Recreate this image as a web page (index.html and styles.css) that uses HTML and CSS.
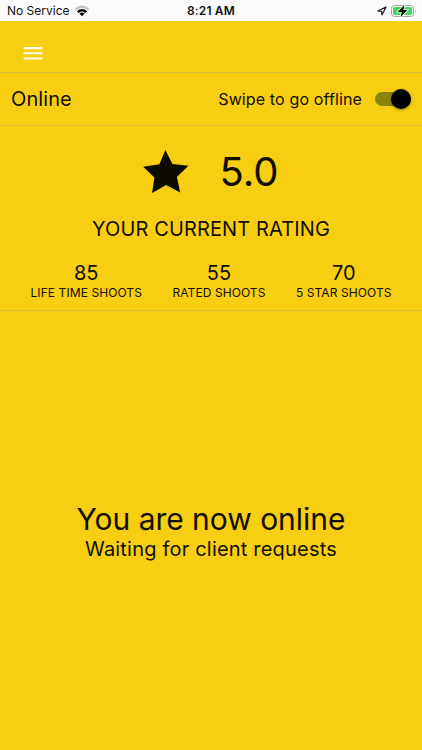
FILE: index.html
```
<!DOCTYPE html>
<html lang="en">
<head>
<meta charset="utf-8">
<title>Online</title>
<link rel="stylesheet" href="styles.css">
</head>
<body>
<div class="status">
  <div class="carrier"><span class="carrier-name">No Service</span>
    <svg width="16" height="12" viewBox="0 0 16 12"><path d="M.6 3.8Q8-2.6 15.4 3.8L13.7 5.5Q8 .7 2.3 5.5Z" fill="#c4c4c4"/><path d="M3 6.2Q8 2 13 6.2L11.3 7.9Q8 5.3 4.7 7.9Z"/><path d="M5.4 8.6Q8 6.6 10.6 8.6L8 11.2Z"/></svg>
  </div>
  <span class="time">8:21 AM</span>
  <div class="power">
    <svg width="10" height="10" viewBox="0 0 10 10"><path d="M.8 5 9 .9 5 9.1 4.7 5.3Z" fill="none" stroke="#111" stroke-width="1.1" stroke-linejoin="round"/></svg>
    <svg width="26" height="14" viewBox="0 0 26 14"><rect x=".5" y="1.5" width="22" height="11" rx="3" fill="#fff" stroke="#a3a3a3"/><rect x="2" y="3" width="19" height="8" rx="1.6" fill="#4bd466"/><path d="M24 5.2q1.6 1.8 0 3.6z" fill="#999"/><path d="M13.5.8 6.8 7.9h4l-1.4 5.3 6.9-7.1h-4z" stroke="#fff" stroke-width="1.4" paint-order="stroke"/></svg>
  </div>
</div>
<header class="toolbar">
  <svg width="20" height="14" viewBox="0 0 20 14"><path d="M.5 2.1h19M.5 7.3h19M.5 12.5h19" stroke="#fffbe3" stroke-width="2.1"/></svg>
</header>
<section class="mode">
  <span class="mode-name">Online</span>
  <span class="mode-hint">Swipe to go offline</span>
  <span class="toggle"><span class="knob"></span></span>
</section>
<section class="rating">
  <div class="score">
    <svg width="46" height="44" viewBox="0 0 46 44"><path d="M22.4 0 29.4 14 45.4 15.7 33.9 27.1 37.2 42.5 23.2 35 9.1 43.1 11.4 27.5 .2 16.7 16.4 14.3Z" fill="#0d0b00"/></svg>
    <span class="score-value">5.0</span>
  </div>
  <div class="caption"><span class="caption-text">YOUR CURRENT RATING</span></div>
  <div class="stats">
    <div class="stat"><b>85</b><span>LIFE TIME SHOOTS</span></div>
    <div class="stat"><b>55</b><span>RATED SHOOTS</span></div>
    <div class="stat"><b>70</b><span>5 STAR SHOOTS</span></div>
  </div>
</section>
<main class="waiting">
  <div class="headline">You are now online</div>
  <div class="subline">Waiting for client requests</div>
</main>
</body>
</html>
```
FILE: styles.css
```
* { box-sizing: border-box; }
body {
  margin: 0;
  height: 750px;
  display: flex;
  flex-direction: column;
  overflow: hidden;
  background: #f7ce12;
  color: #120f00;
  font-family: Inter, "Liberation Sans", sans-serif;
  white-space: nowrap;
}
svg { display: block; flex: none; }
.status {
  height: 21px;
  display: grid;
  grid-template-columns: 1fr auto 1fr;
  align-items: center;
  padding: 1px 5px 0 7px;
  background: #fbfbfb;
  color: #111;
  font-size: 12px;
  line-height: 20px;
}
.carrier { display: flex; align-items: center; gap: 4px; }
.time { font-weight: 600; letter-spacing: 0.15px; margin-right: 2px; }
.power { display: flex; align-items: center; justify-content: flex-end; gap: 4px; }
.toolbar {
  height: 52px;
  padding: 25px 0 0 23px;
  border-bottom: 1px solid #d9bb3c;
}
.mode {
  height: 53px;
  display: flex;
  align-items: center;
  padding: 0 11px;
  border-bottom: 1px solid #d9bb3c;
}
.mode-name { font-size: 20px; letter-spacing: 0.1px; margin-right: auto; }
.mode-hint { font-size: 16px; letter-spacing: 0.13px; margin-right: 13px; }
.toggle {
  width: 36px;
  height: 14px;
  border-radius: 7px;
  background: #8a8509;
  display: flex;
  align-items: center;
  justify-content: flex-end;
}
.knob {
  width: 20px;
  height: 20px;
  flex: none;
  border-radius: 50%;
  background: #000;
  box-shadow: 0 1px 3px rgba(0, 0, 0, 0.4);
}
.rating { height: 185px; border-bottom: 1px solid #d9bb3c; }
.score {
  height: 91px;
  display: flex;
  align-items: center;
  justify-content: center;
  gap: 31px;
  padding-right: 1px;
}
.score-value { font-size: 40px; line-height: 48px; }
.caption { font-size: 20px; line-height: 24px; letter-spacing: 0.13px; text-align: center; }
.stats { display: flex; justify-content: space-evenly; margin-top: 20px; }
.stat { display: flex; flex-direction: column; align-items: center; }
.stat b { font-weight: 400; font-size: 20px; line-height: 25px; }
.stat span { font-size: 12px; line-height: 14px; letter-spacing: 0.08px; }
.waiting { text-align: center; padding-top: 190px; }
.headline { font-size: 30px; line-height: 36px; letter-spacing: -0.03px; }
.subline { font-size: 20px; line-height: 24px; letter-spacing: 0.2px; }
```
